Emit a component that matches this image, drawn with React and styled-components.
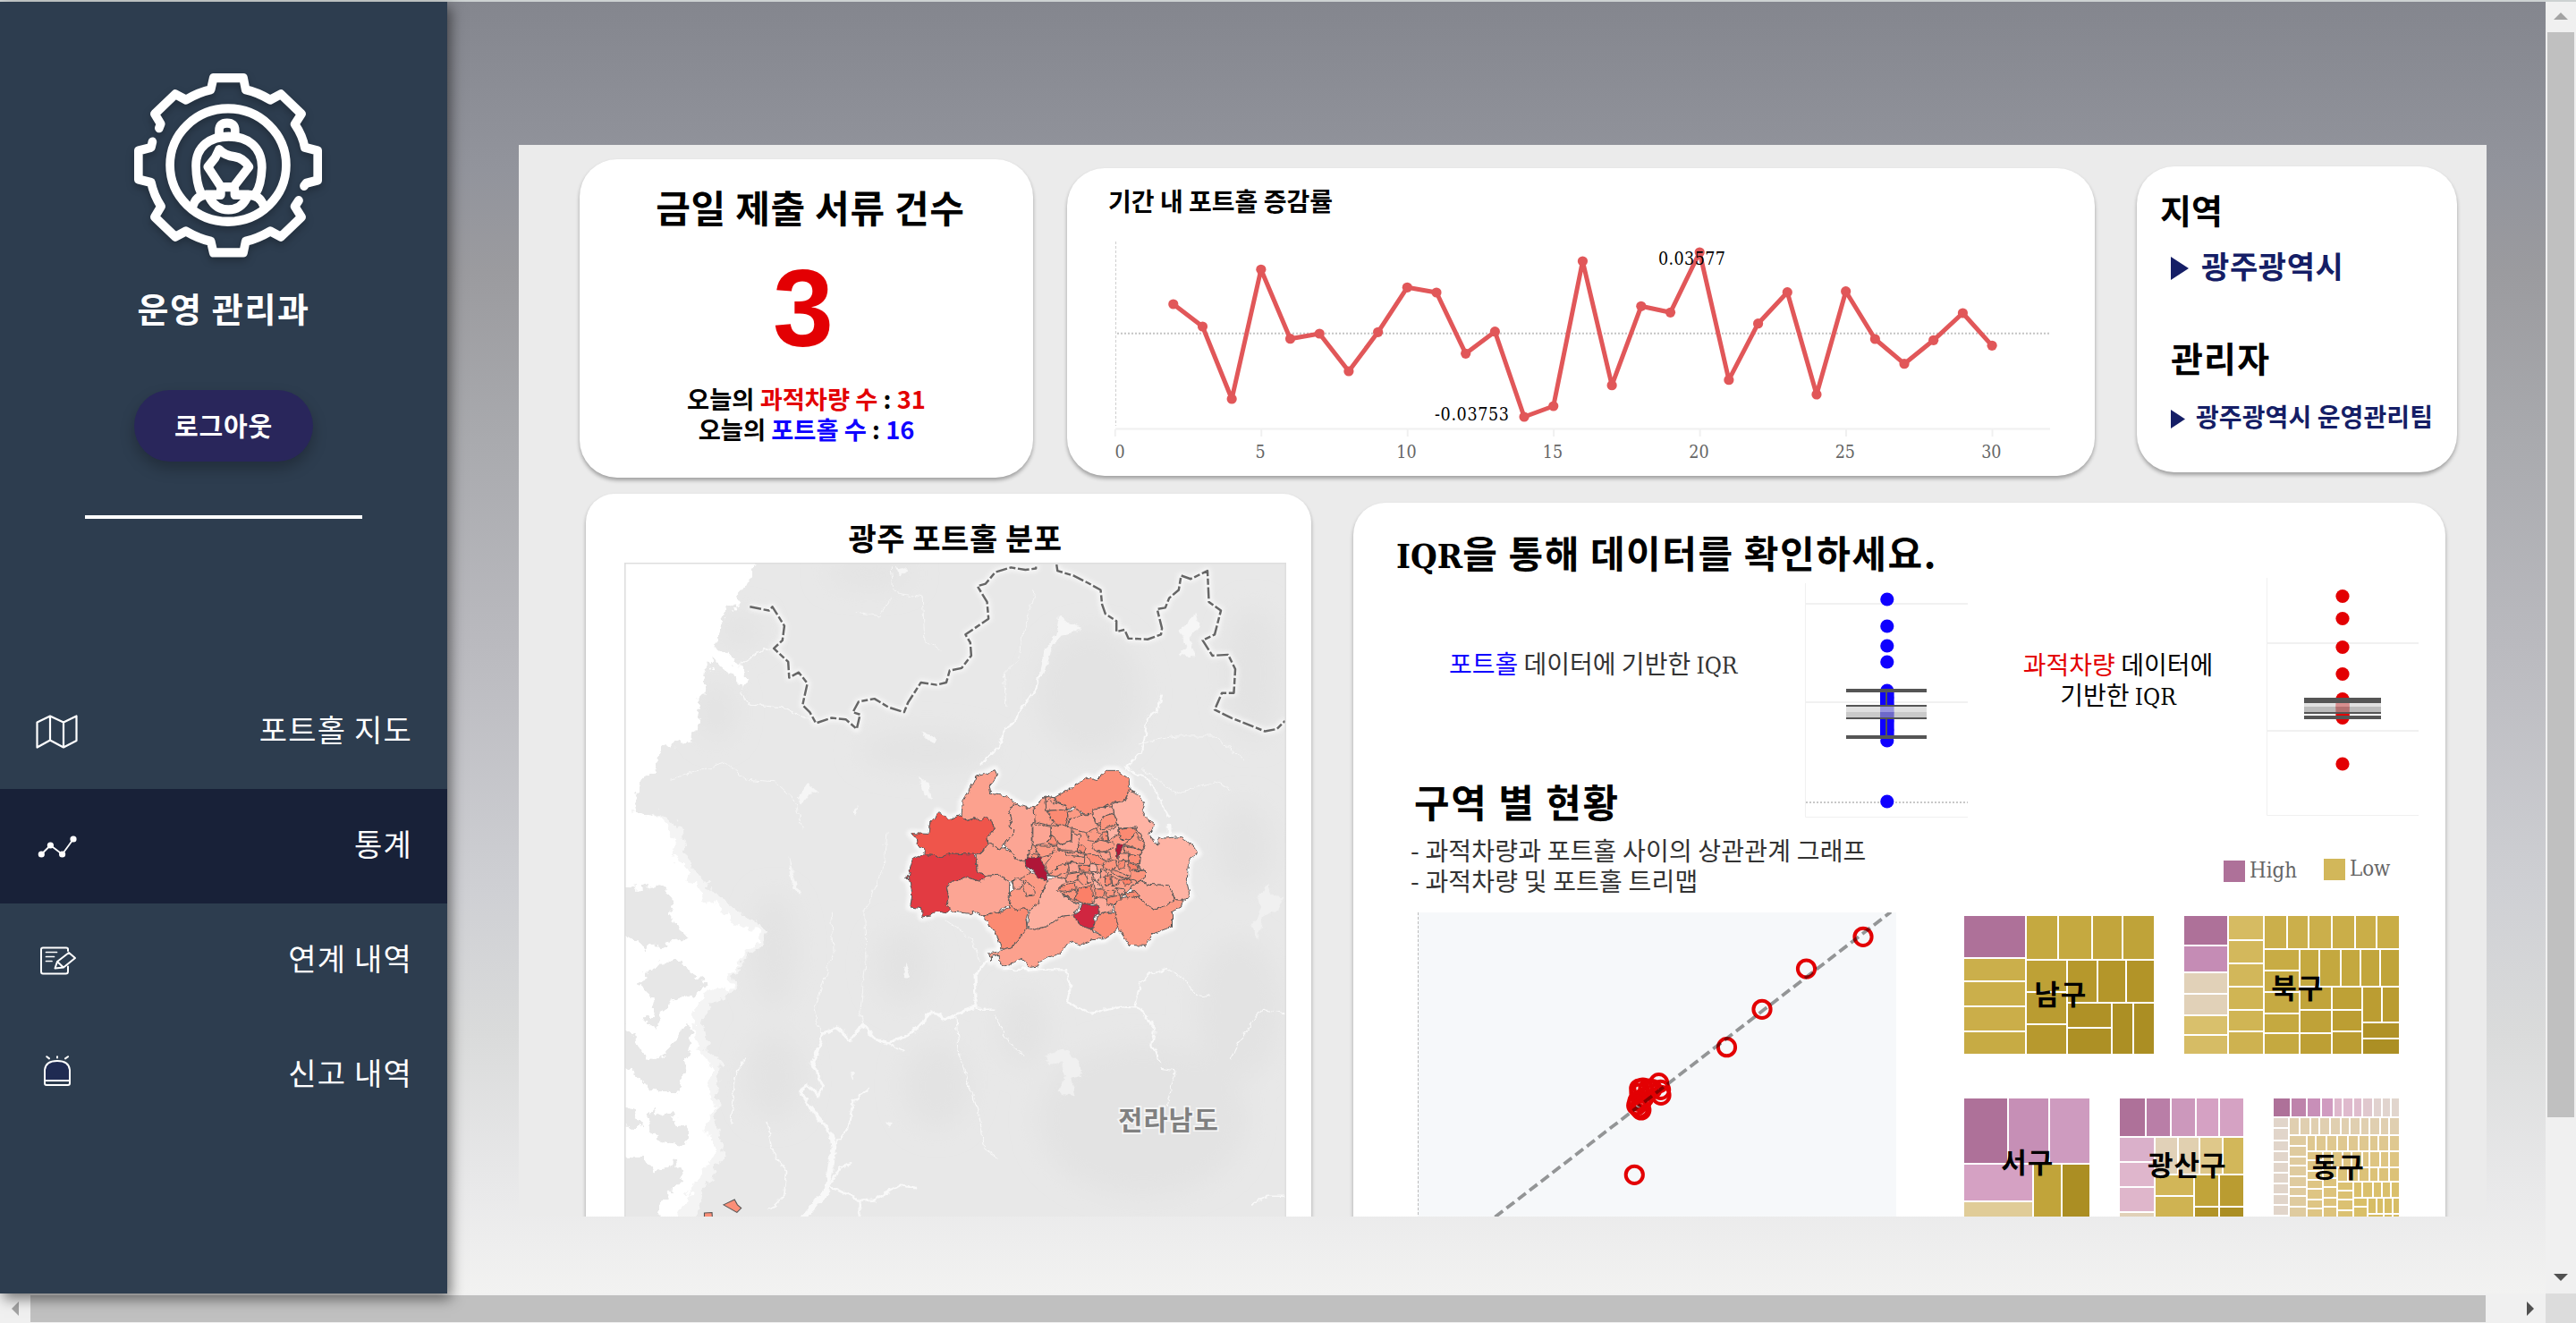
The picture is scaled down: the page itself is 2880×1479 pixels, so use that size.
import React from 'react';
import styled, { createGlobalStyle } from 'styled-components';

const KR = '"Noto Sans CJK KR", sans-serif';
const SLAB = '"DejaVu Serif Condensed", "DejaVu Serif", serif';

const GlobalStyle = createGlobalStyle`
  * { box-sizing: border-box; }
  html, body { margin: 0; padding: 0; overflow: hidden; }
  body { font-family: ${KR}; background: #f0f0f0; color: #000; }
  svg { display: block; flex: none; }
`;

/* ---------- shell ---------- */
const Shell = styled.div`
  display: grid;
  grid-template-columns: 500px 2346px 34px;
  grid-template-rows: 1444px 33px;
  width: 2880px;
  height: 1479px;
  border-top: 2px solid #cdd2d2;
`;
const Sidebar = styled.aside`
  display: flex;
  flex-direction: column;
  align-items: center;
  background: #2d3d4f;
  box-shadow: 4px 6px 14px rgba(0, 0, 0, 0.5);
  color: #fff;
  z-index: 1;
`;
const GearIcon = styled.svg`
  width: 210px;
  height: 206px;
  margin: 80px 0 0 10px;
  overflow: visible;
  filter: drop-shadow(0 4px 4px rgba(0, 0, 0, 0.25));
`;
const Dept = styled.div`
  margin-top: 28px;
  font-size: 38px;
  font-weight: 700;
  line-height: 56px;
  letter-spacing: 1.6px;
`;
const Logout = styled.button`
  width: 200px;
  height: 80px;
  margin-top: 64px;
  padding: 0 0 3px;
  border: 0;
  border-radius: 40px;
  background: #29265b;
  box-shadow: 0 8px 16px rgba(0, 0, 0, 0.25);
  color: #fff;
  font: 700 29px ${KR};
  letter-spacing: 0.8px;
`;
const Rule = styled.hr`
  width: 310px;
  height: 4px;
  margin: 60px 0 0;
  border: 0;
  background: #fff;
`;
const Menu = styled.nav`
  width: 100%;
  margin-top: 174px;
`;
const MenuItem = styled.a`
  display: flex;
  align-items: center;
  justify-content: space-between;
  height: 128px;
  padding: 0 39px 0 40px;
  background: ${(p) => (p.$active ? '#182138' : 'transparent')};
  color: #fff;
`;
const MenuLabel = styled.span`
  padding-bottom: 7px;
  font-size: 34px;
  letter-spacing: 1.2px;
`;
const Main = styled.main`
  padding: 160px 66px 84px 80px;
  background: linear-gradient(
    180deg,
    #84868e 0%,
    #92949c 13%,
    #9b9b9f 21%,
    #a9aaae 34%,
    #bababf 50%,
    #cfd0d4 69%,
    #dadbdb 80%,
    #e9e9ea 92%,
    #f2f2f1 100%
  );
`;
const Panel = styled.section`
  width: 2200px;
  height: 1198px;
  padding-top: 16px;
  overflow: hidden;
  background: #ebebeb;
`;

/* ---------- scroll bars ---------- */
const VBar = styled.div`
  display: flex;
  flex-direction: column;
  align-items: center;
  justify-content: space-between;
  padding: 12px 0 14px;
  background: #f0f0f0;
`;
const VThumb = styled.div`
  width: 30px;
  height: 1213px;
  margin: 14px 0 auto;
  background: #c0c0c0;
`;
const HBar = styled.div`
  grid-column: 1 / 3;
  display: flex;
  align-items: center;
  padding: 0 13px;
  background: #f0f0f0;
`;
const HThumb = styled.div`
  width: 2745px;
  height: 30px;
  margin: 0 auto 0 13px;
  background: #c0c0c0;
`;
const Corner = styled.div`
  background: #dcdcdc;
`;

/* ---------- cards ---------- */
const Row = styled.div`
  display: flex;
  align-items: flex-start;
  width: max-content;
  padding-left: ${(p) => p.$left}px;
  margin-bottom: 18px;
`;
const Card = styled.article`
  width: ${(p) => p.$w}px;
  height: ${(p) => p.$h}px;
  margin: ${(p) => p.$top || 0}px 0 0 ${(p) => p.$gap || 0}px;
  padding-top: ${(p) => p.$pad}px;
  border-radius: ${(p) => p.$radius || 42}px;
  background: #fff;
  box-shadow: 0 3px 4px rgba(0, 0, 0, 0.32);
`;
const Line = styled.div`
  margin: ${(p) => p.$top || 0}px 0 0 ${(p) => p.$left || 0}px;
  font-size: ${(p) => p.$size}px;
  font-weight: ${(p) => p.$weight || 400};
  line-height: ${(p) => p.$lh}px;
  letter-spacing: ${(p) => p.$ls || 0}px;
  text-align: ${(p) => (p.$center ? 'center' : 'left')};
  color: ${(p) => p.$color || '#000'};
  white-space: nowrap;
`;
const BigNumber = styled.div`
  margin: 24px 0 0 -7px;
  font: 700 122px/120px "Liberation Sans", Arial, sans-serif;
  text-align: center;
  color: #e30003;
`;
const Tint = styled.span`
  color: ${(p) => p.$c};
`;
const Slab = styled.span`
  font-family: ${SLAB};
  font-stretch: condensed;
  font-size: ${(p) => p.$size}px;
  line-height: 1;
  letter-spacing: 0;
`;
const Pointer = styled.div`
  display: flex;
  align-items: center;
  gap: ${(p) => p.$gap}px;
  margin: ${(p) => p.$top}px 0 0 38px;
  height: ${(p) => p.$lh}px;
  color: #151e66;
`;
const Arrow = styled.svg`
  margin-top: 6px;
  fill: currentColor;
`;
const Flex = styled.div`
  display: flex;
  align-items: flex-start;
  height: ${(p) => p.$h}px;
`;
const Column = styled.div`
  width: ${(p) => p.$w}px;
  padding-top: ${(p) => p.$pad || 0}px;
`;
const LegendItem = styled.div`
  display: flex;
  align-items: flex-start;
  gap: 5px;
  width: 112px;
  margin-top: ${(p) => p.$top}px;
  color: #666;
`;
const Swatch = styled.span`
  width: 24px;
  height: 24px;
  background: ${(p) => p.$c};
`;
const ScatterSvg = styled.svg`
  margin-left: 72px;
`;
const TreeGrid = styled.div`
  display: flex;
  flex-direction: column;
  gap: 50px;
  padding-top: 4px;
  margin-left: 75px;
`;
const TreeRow = styled.div`
  display: flex;
  gap: 34px;
`;
const TreeBox = styled.figure`
  position: relative;
  margin: 0;
`;
const TreeLabel = styled.figcaption`
  position: absolute;
  left: ${(p) => p.$x}px;
  top: ${(p) => p.$y}px;
  transform: translate(-50%, -50%);
  font-size: 31px;
  font-weight: 700;
  line-height: 40px;
  letter-spacing: 1px;
  white-space: nowrap;
`;
const MapFrame = styled.div`
  width: 740px;
  height: 800px;
  margin: 3px 0 0 43px;
  overflow: hidden;
`;

/* ---------- growth line ---------- */
const growth = [
  340, 365, 446, 301.3, 378.7, 373, 415, 371.3, 321.3, 327, 395.3, 370.7, 466, 454, 292, 430.7,
  342.3, 349.3, 282, 424.7, 361.7, 326.7, 441, 325.7, 379, 406.7, 380.3, 350, 386.3,
].map((y, i) => [1246.4 + 32.69 * (i + 2), y]);

const slabText = { fontFamily: SLAB, fontStretch: 'condensed' };

function GrowthChart() {
  return (
    <svg width="1149" height="288" viewBox="1193 244 1149 288">
      <path d="M1247.5 270V476" stroke="#cfcfcf" strokeDasharray="3 2" />
      <path d="M1247 479.5H2292" stroke="#f0f0f0" strokeWidth="2" />
      {[0, 5, 10, 15, 20, 25, 30].map((n) => (
        <g key={n}>
          <path d={`M${1246.8 + 32.69 * n} 480V488`} stroke="#f0f0f0" strokeWidth="2" />
          <text
            x={n === 0 ? 1252 : 1245.6 + 32.69 * n}
            y="511.5"
            textAnchor="middle"
            fontSize="19.5"
            fill="#666"
            {...slabText}
          >
            {n}
          </text>
        </g>
      ))}
      <path d="M1249 372.7H2292" stroke="#c4c4c4" strokeWidth="2" strokeDasharray="2 2" />
      <polyline
        points={growth.map((p) => p.join(',')).join(' ')}
        fill="none"
        stroke="#e15759"
        strokeWidth="5"
        strokeLinejoin="round"
      />
      {growth.map(([x, y]) => (
        <circle key={x} cx={x} cy={y} r="5.6" fill="#e15759" />
      ))}
      <text x="1854" y="296" fontSize="19.5" textLength="75" {...slabText}>0.03577</text>
      <text x="1604" y="470" fontSize="19.5" textLength="83" {...slabText}>-0.03753</text>
    </svg>
  );
}

/* ---------- box plots ---------- */
function HolePlot() {
  return (
    <svg width="200" height="284" viewBox="2010 646 200 284">
      <path d="M2018.5 652V913.5H2200" fill="none" stroke="#f0f0f0" />
      <path d="M2019 675H2200M2019 785H2200" stroke="#f1f1f1" strokeWidth="2" />
      <path d="M2019 897H2200" stroke="#c8c8c8" strokeWidth="2" strokeDasharray="2 2" />
      <g fill="#0f00ff">
        {[670, 700, 722, 740, 772, 780, 788, 796, 806, 816, 828, 896].map((y) => (
          <circle key={y} cx="2109.8" cy={y} r="7.6" />
        ))}
        <rect x="2102" y="772" width="15.6" height="54" />
      </g>
      <path d="M2109 773V789M2109 803V823" stroke="#555" strokeWidth="2" />
      <rect x="2064" y="790" width="90" height="6" fill="#dcdcdc" fillOpacity=".55" />
      <rect x="2064" y="796" width="90" height="6" fill="#aaa" fillOpacity=".62" />
      <rect x="2064" y="790" width="90" height="6" fill="#ccc" fillOpacity=".35" />
      <path d="M2064 772H2154M2064 824H2154" stroke="#555" strokeWidth="4" />
      <path d="M2064 789H2154M2064 803H2154" stroke="#555" strokeWidth="2" />
    </svg>
  );
}
function OverloadPlot() {
  return (
    <svg width="184" height="284" viewBox="2526 646 184 284">
      <path d="M2534.5 646V911.5H2704" fill="none" stroke="#f0f0f0" />
      <path d="M2535 719H2704M2535 817H2704" stroke="#f1f1f1" strokeWidth="2" />
      <g fill="#e30003">
        {[666.5, 691.5, 723.5, 753.5, 781.5, 790, 802.5, 854].map((y) => (
          <circle key={y} cx="2619" cy={y} r="7.6" />
        ))}
        <rect x="2611.4" y="782" width="15.4" height="20" />
      </g>
      <rect x="2576" y="786" width="86" height="4" fill="#d3d3d3" fillOpacity=".68" />
      <rect x="2576" y="790" width="86" height="6" fill="#a0a0a0" fillOpacity=".7" />
      <path d="M2576 783H2662" stroke="#555" strokeWidth="6" />
      <path d="M2576 797H2662" stroke="#555" strokeWidth="2" />
      <path d="M2576 802H2662" stroke="#555" strokeWidth="4" />
    </svg>
  );
}

/* ---------- scatter ---------- */
const scatter = [
  [2083, 1047.3], [2019.5, 1083], [1970, 1128.3], [1930.5, 1170.7], [1827.3, 1313.3],
  [1854.6, 1210.7], [1856.6, 1218.3], [1857, 1224.3], [1832.8, 1217], [1836.8, 1216],
  [1843, 1217], [1833, 1222], [1838, 1227], [1829.7, 1235.7], [1833, 1239], [1834.8, 1241],
  [1835, 1232], [1847, 1217.5], [1831, 1231],
];
function ScatterChart() {
  return (
    <ScatterSvg width="536" height="340" viewBox="1585 1020 536 340">
      <rect x="1585" y="1020" width="535" height="340" fill="#f6f8fa" />
      <path d="M1585.5 1020V1360" stroke="#bdbdbd" strokeDasharray="3 2" />
      {scatter.map(([x, y], i) => (
        <circle key={i} cx={x} cy={y} r="9.6" fill="none" stroke="#e30003" strokeWidth="4" />
      ))}
      <path
        d="M1671.5 1360.5L2114 1019.5"
        stroke="#000"
        strokeOpacity=".4"
        strokeWidth="3.8"
        strokeDasharray="11 5.2"
      />
    </ScatterSvg>
  );
}

/* ---------- tree maps: [x1, y1, x2, y2, colour] ---------- */
const namgu = [
  [48, 72, 252, 210, '#ae7199'], [48, 216, 252, 288, '#cbaf4b'], [48, 294, 252, 372, '#cbaf4b'],
  [48, 378, 252, 456, '#cbae49'], [48, 462, 252, 534, '#c7ab44'], [258, 72, 360, 216, '#c5a940'],
  [366, 72, 474, 216, '#c5a940'], [480, 72, 576, 216, '#c2a53c'], [582, 72, 684, 216, '#bfa339'],
  [258, 222, 390, 324, '#bea136'], [258, 330, 390, 432, '#ba9c31'], [258, 438, 390, 534, '#b7992e'],
  [396, 222, 492, 360, '#b6982c'], [498, 222, 588, 360, '#b4962a'], [594, 222, 684, 360, '#b29428'],
  [396, 366, 540, 444, '#af9126'], [396, 450, 540, 534, '#ad9025'], [546, 366, 612, 534, '#ac8f24'],
  [618, 366, 684, 534, '#ab8e23'],
];
const bukgu = [
  [786, 72, 930, 168, '#ae7199'], [786, 174, 930, 258, '#c58cb5'], [786, 264, 930, 330, '#e1d1b8'],
  [786, 336, 930, 402, '#e1d1b8'], [786, 408, 930, 468, '#d9c06c'], [786, 474, 930, 534, '#d6bc65'],
  [936, 72, 1050, 150, '#d6bb62'], [936, 156, 1050, 228, '#d3b85c'], [936, 234, 1050, 306, '#d2b75a'],
  [936, 312, 1050, 384, '#d0b554'], [936, 390, 1050, 456, '#d0b554'], [936, 462, 1050, 534, '#ceb250'],
  [1056, 72, 1128, 180, '#cbaf4b'], [1134, 72, 1200, 180, '#cbaf4b'], [1206, 72, 1278, 180, '#cbaf4b'],
  [1284, 72, 1356, 180, '#caae49'], [1362, 72, 1428, 180, '#caae48'], [1434, 72, 1506, 180, '#c9ad46'],
  [1056, 186, 1170, 252, '#c8ac45'], [1056, 258, 1170, 324, '#c7ab43'], [1056, 330, 1170, 396, '#c6aa42'],
  [1056, 402, 1170, 462, '#c5a940'], [1056, 468, 1170, 534, '#c5a940'],
  [1176, 186, 1236, 306, '#c5a940'], [1242, 186, 1308, 306, '#c4a83f'], [1314, 186, 1374, 306, '#c4a83f'],
  [1380, 186, 1440, 306, '#c2a63c'], [1446, 186, 1506, 306, '#c0a43a'],
  [1176, 312, 1278, 384, '#c1a43a'], [1176, 390, 1278, 462, '#bfa238'], [1176, 468, 1278, 534, '#bd9f34'],
  [1284, 312, 1380, 384, '#bea136'], [1284, 390, 1380, 456, '#bc9e33'], [1284, 462, 1380, 534, '#bb9d32'],
  [1386, 312, 1446, 426, '#bb9d32'], [1452, 312, 1506, 426, '#ba9c31'], [1386, 432, 1506, 480, '#b09227'],
  [1386, 486, 1506, 534, '#ac8f24'],
];
const seogu = [
  [48, 684, 192, 900, '#ae7199'], [198, 684, 330, 900, '#c68fb6'], [336, 684, 468, 900, '#ce9bbf'],
  [48, 906, 276, 1026, '#d5a1c3'], [48, 1032, 276, 1080, '#e0cc98'], [282, 906, 372, 1080, '#c1a43a'],
  [378, 906, 468, 1080, '#ab8e23'],
];
const gwangsan = [
  [570, 684, 654, 810, '#ae7199'], [660, 684, 738, 810, '#b97ea7'], [744, 684, 822, 810, '#cc98bc'],
  [828, 684, 900, 810, '#d5a1c3'], [906, 684, 984, 810, '#d5a2c3'], [570, 816, 684, 894, '#dab0ca'],
  [570, 900, 684, 978, '#dfb6cc'], [570, 984, 684, 1062, '#dfb6cb'], [570, 1068, 684, 1080, '#e1d1b8'],
  [690, 816, 762, 936, '#e1d1b8'], [768, 816, 834, 936, '#e1d0b0'], [840, 816, 912, 936, '#dfc88a'],
  [918, 816, 984, 936, '#d2b75a'], [690, 942, 816, 1008, '#d2b658'], [690, 1014, 816, 1080, '#cfb352'],
  [822, 942, 900, 1044, '#c1a43a'], [906, 942, 984, 1044, '#ba9c31'], [822, 1050, 900, 1080, '#b29428'],
  [906, 1050, 984, 1080, '#ab8e23'],
];
const across = (y1, y2, spans, c) => spans.map(([a, b], i) => [a, y1, b, y2, Array.isArray(c) ? c[i] : c]);
const down = (x1, x2, spans, c) => spans.map(([a, b]) => [x1, a, x2, b, c]);
const donggu = [
  ...across(684, 744,
    [[1086, 1140], [1146, 1194], [1200, 1242], [1248, 1284], [1290, 1314], [1320, 1350], [1356, 1380], [1386, 1416], [1422, 1446], [1452, 1476], [1482, 1506]],
    ['#ae7199', '#be83ab', '#c88fb8', '#d09bc0', '#deb8cc', '#dfbacd', '#dfbccd', '#e0c8ce', '#e1d2cf', '#e1d4ce', '#e1d5cd']),
  ...down(1086, 1134, [[750, 780], [786, 822], [828, 858], [864, 894], [900, 930], [936, 966], [972, 1002], [1008, 1038], [1044, 1074]], '#e1d5ca'),
  ...across(750, 804, [[1140, 1170], [1176, 1206], [1212, 1236], [1242, 1272], [1278, 1308], [1314, 1338], [1344, 1374], [1380, 1404], [1410, 1440], [1446, 1470], [1476, 1506]], '#e0cfb0'),
  ...down(1140, 1194, [[810, 840], [846, 876], [882, 906], [912, 942], [948, 978], [984, 1008], [1014, 1044], [1050, 1080]], '#dfcb9f'),
  ...across(810, 858, [[1200, 1224], [1230, 1260], [1266, 1296], [1302, 1332], [1338, 1368], [1374, 1404], [1410, 1434], [1440, 1470], [1476, 1506]], '#dfc890'),
  ...down(1200, 1248, [[864, 888], [894, 924], [930, 954], [960, 984], [990, 1020], [1026, 1050], [1056, 1080]], '#dec584'),
  ...across(864, 912, [[1254, 1278], [1284, 1314], [1320, 1344], [1350, 1380], [1386, 1404], [1410, 1440], [1446, 1470], [1476, 1506]], '#dec582'),
  ...down(1254, 1296, [[918, 948], [954, 978], [984, 1014], [1020, 1044], [1050, 1080]], '#ddc37c'),
  ...across(918, 960, [[1302, 1332], [1338, 1368], [1374, 1404], [1410, 1434], [1440, 1470], [1476, 1506]], '#dcc278'),
  ...down(1302, 1350, [[966, 990], [996, 1020], [1026, 1056], [1062, 1080]], '#dbc172'),
  ...across(966, 1014, [[1356, 1380], [1386, 1416], [1422, 1446], [1452, 1476], [1482, 1506]], '#dac06c'),
  ...down(1356, 1398, [[1020, 1044], [1050, 1080]], '#d9bf68'),
  ...across(1020, 1068, [[1404, 1428], [1434, 1452], [1458, 1482], [1488, 1506]], '#d7bd65'),
  ...across(1074, 1080, [[1404, 1452], [1458, 1482], [1488, 1506]], '#d6bc62'),
];

function Treemap({ cells, box, name, lx, ly }) {
  const [x, y, w, h] = box;
  return (
    <TreeBox>
      <svg width={w / 3} height={h / 3} viewBox={box.join(' ')} shapeRendering="crispEdges">
        {cells.map(([x1, y1, x2, y2, c], i) => (
          <rect key={i} x={x1} y={y1} width={x2 - x1} height={y2 - y1} fill={c} />
        ))}
      </svg>
      <TreeLabel $x={(lx - x) / 3} $y={(ly - y) / 3 - 3}>{name}</TreeLabel>
    </TreeBox>
  );
}

/* ---------- district map ---------- */
const districts = [
  ['#fc9d88', '527,250 563,213 595,218 600,232 638,258 690,272 790,235 812,325 868,318 885,345 898,380 885,410 880,460 900,480 850,520 830,540 818,555 775,575 690,570 660,570 605,525 635,490 600,482 575,480 555,435 550,418 497,425 521,380 521,310'],
  ['#fca18e', '284,277 287,232 312,190 332,147 362,140 395,125 402,140 390,165 377,180 382,205 430,212 470,240 455,245 443,262 452,290 443,315 457,325 455,350 430,365 420,385 410,393 395,380 372,372 370,350 392,322 385,298 368,284 350,295 330,286 302,295'],
  ['#ef544c', '205,266 240,290 284,277 302,295 330,286 350,295 368,284 385,298 392,322 370,350 372,372 355,400 325,410 250,405 215,420 190,412 162,410 155,390 138,378 135,360 115,338 172,340 178,300 195,290'],
  ['#e23b42', '120,422 155,410 190,412 215,420 245,405 325,408 332,425 335,465 368,480 345,498 320,490 295,485 250,500 234,520 240,550 233,580 245,590 232,605 200,600 180,612 152,618 150,590 112,585 118,540 108,488 93,486 108,480 112,450'],
  ['#fca594', '234,520 250,500 295,485 320,490 345,498 368,480 410,478 445,500 443,560 445,575 400,605 355,615 320,598 315,607 250,600 233,580 240,550'],
  ['#fca08d', '372,372 395,380 410,393 420,385 445,395 470,425 495,435 497,448 514,465 495,485 478,495 445,497 410,478 368,480 335,465 332,410 355,400'],
  ['#fca594', '470,240 500,250 527,250 530,300 521,310 521,380 510,400 505,420 495,435 470,425 445,395 430,380 430,365 455,350 457,325 443,315 452,290 443,262 455,245'],
  ['#fb8a72', '445,575 443,590 400,605 355,615 375,640 380,655 395,662 405,690 420,727 455,718 480,690 503,660 500,625 508,595 490,590 470,598'],
  ['#fca18e', '420,727 455,718 503,655 525,660 545,655 570,650 620,615 657,612 665,625 690,650 718,658 725,670 755,680 757,692 720,695 685,712 645,700 615,740 570,755 545,770 540,783 514,787 500,770 485,757 460,770 430,782 412,775 410,745 385,750 383,765 375,740 410,735'],
  ['#fdb0a0', '572,498 600,482 635,490 630,505 610,520 625,545 660,570 680,578 657,612 620,615 570,650 545,655 525,660 503,650 510,600 540,570 550,548 565,510'],
  ['#fc9a84', '450,497 478,495 514,465 530,475 545,490 572,498 565,510 548,550 540,575 508,598 490,590 470,598 445,575 447,535 460,525'],
  ['#fca594', '455,500 470,487 490,500 480,525 458,525'],
  ['#fc9d88', '498,495 525,520 528,545 500,550 490,515'],
  ['#fb8e77', '595,218 660,180 703,150 735,160 770,127 805,127 845,155 847,190 830,230 790,235 760,250 725,255 720,275 690,272 680,262 655,250 638,258 630,245 600,232'],
  ['#feb3a4', '847,190 880,210 897,235 888,260 905,290 930,310 913,340 930,370 943,375 945,355 1020,350 1060,380 1077,405 1050,420 1043,450 1040,505 1050,548 1030,562 1000,560 990,535 975,512 910,508 885,495 900,480 900,462 880,460 885,410 898,380 885,345 868,318 830,320 812,325 805,300 795,270 790,235 830,230'],
  ['#fca594', '850,520 885,495 910,508 975,512 990,535 998,560 970,580 935,593 905,580 880,555 860,535'],
  ['#fc9a84', '795,580 818,555 860,545 880,555 905,580 935,593 970,580 998,560 1030,562 1020,585 990,600 990,650 925,675 900,715 845,712 815,665 800,625'],
  ['#fb8c75', '718,658 733,640 735,620 765,602 797,605 810,650 800,665 765,690 755,680'],
  ['#fdaa9a', '725,575 735,555 775,560 790,585 790,600 765,602 745,612 745,582'],
  ['#fc9d88', '527,250 565,215 568,262 590,300 583,312 530,300'],
  ['#fca18e', '565,215 590,235 635,245 635,258 568,262'],
  ['#fb8a72', '572,262 638,258 640,285 632,315 610,310 590,300'],
  ['#fc9a84', '638,268 655,262 665,248 680,262 682,285 668,292 645,290'],
  ['#fca18e', '642,295 690,275 725,275 727,300 745,310 735,325 710,338 640,320'],
  ['#fca594', '725,255 790,248 795,270 762,280 755,300 735,305 725,280'],
  ['#fc957e', '762,280 795,270 805,305 755,325 745,310'],
  ['#fca594', '523,305 583,316 583,345 570,370 523,378'],
  ['#fc9d88', '585,316 620,308 652,320 652,365 610,375 600,355 583,345'],
  ['#fb8e77', '570,370 583,345 600,355 605,375 595,380'],
  ['#fc9a84', '530,380 595,382 590,408 550,418 535,402'],
  ['#fb8e77', '520,405 545,410 530,430 518,420'],
  ['#fca594', '600,380 652,365 655,332 685,345 675,375 675,398 610,392'],
  ['#fb8e77', '675,375 690,378 702,390 695,402 675,398'],
  ['#fc9a84', '705,335 735,320 750,345 735,365 710,362'],
  ['#fb8e77', '755,335 770,332 772,362 755,362'],
  ['#feb3a4', '770,330 810,312 812,340 775,365'],
  ['#fb8a72', '812,325 868,318 870,335 845,360 818,362'],
  ['#fc9a84', '845,360 868,335 898,380 890,395 830,375'],
  ['#fc9d88', '720,375 745,360 795,370 790,390 755,400 730,395'],
  ['#fc9d88', '592,408 605,392 697,418 695,440 640,432 575,478 565,440'],
  ['#fc9d88', '630,400 697,405 695,418 635,410'],
  ['#fc9a84', '575,478 610,445 640,440 640,470 600,482'],
  ['#fca594', '642,435 675,440 680,465 645,470'],
  ['#fb8a72', '680,445 715,445 712,465 682,465'],
  ['#fc9d88', '635,475 680,468 670,495 635,502'],
  ['#fb8e77', '610,520 665,502 668,525 625,532 605,530'],
  ['#fc957e', '620,540 668,528 665,565'],
  ['#fb8068', '672,525 720,512 725,575 690,572 665,560'],
  ['#fc9a84', '680,470 698,470 710,505 690,510 675,495'],
  ['#fca594', '700,470 720,472 722,500 710,505'],
  ['#feb3a4', '715,440 735,440 740,465 720,470 712,460'],
  ['#fb8e77', '697,408 730,410 765,430 755,445 720,438'],
  ['#fca18e', '740,400 780,400 785,425 765,430'],
  ['#fc957e', '770,435 800,425 805,450 785,465 755,450'],
  ['#fb8a72', '810,430 835,430 830,450 812,460'],
  ['#fc9a84', '830,380 890,395 880,412 832,405'],
  ['#fb8e77', '845,405 882,412 880,440 845,435'],
  ['#fb8068', '845,440 880,445 870,462 845,462'],
  ['#fca18e', '812,405 842,405 845,430 812,428'],
  ['#fc957e', '850,465 900,462 900,485 875,500 850,490'],
  ['#fc9a84', '790,460 845,480 835,490 790,472'],
  ['#feb3a4', '720,470 745,468 750,490 735,500'],
  ['#fca18e', '750,455 775,470 770,490 750,485'],
  ['#fb8a72', '765,480 785,475 785,510 765,515'],
  ['#fc9a84', '787,485 815,490 810,510 790,515'],
  ['#fb8068', '817,490 850,490 855,505 830,515'],
  ['#fdb0a0', '720,495 745,500 755,520 735,530'],
  ['#fb8e77', '730,525 765,525 760,550 730,555'],
  ['#fc957e', '765,530 795,525 800,545 770,550'],
  ['#fb8e77', '770,555 815,545 818,560 795,580 772,575'],
  ['#fca18e', '800,520 830,525 835,545 815,545'],
  ['#fb8a72', '835,538 870,532 882,548 840,555'],
  ['#af1338', '497,425 520,420 550,418 555,435 565,455 572,498 545,490 530,470 514,455 497,448'],
  ['#d0263f', '690,570 720,580 745,582 745,605 725,620 733,640 715,657 690,650 665,625 657,610 680,595'],
  ['#af1338', '805,370 830,375 818,400 805,422 803,395'],
];
const provinceLines = [
  'M370,260 410,268 417,260 442,300 438,330 420,347 450,375 452,408 472,397 490,420 480,465 495,480 508,503 540,492 570,495 593,515 600,485 585,480 597,458 630,452 660,470 692,480 700,460 727,418 760,423 780,418 787,393 812,388 832,362 830,335 820,318 868,285 865,250 845,217 862,212 882,188 915,178 945,183 967,180 967,172',
  'M1010,172 1012,185 1045,195 1075,210 1102,225 1105,255 1112,275 1135,290 1135,312 1152,308 1160,326 1200,328 1228,318 1230,305 1220,265 1237,262 1245,242 1265,225 1270,195 1290,202 1325,185 1328,250 1353,268 1340,318 1315,330 1335,362 1368,360 1383,390 1380,440 1355,440 1340,475 1375,492 1445,520 1470,515 1487,498',
];
const rivers = [
  [4, 'M975,405 968,430 930,480 925,500 905,510 890,550 852,590'],
  [3.5, 'M1230,445 1220,478 1200,490 1190,560 1155,595'],
  [3.5, 'M1155,597 1195,615 1220,650 1245,700'],
  [9, 'M1245,715V742'],
  [6, 'M865,1000 840,1030 842,1095 805,1108 780,1120 750,1105 710,1150 660,1170 630,1162 605,1132 580,1165 550,1138 525,1150 500,1215 522,1260 515,1280 490,1258 475,1270 500,1310 540,1360'],
  [12, 'M540,1360 545,1390 530,1480 485,1531'],
  [3, 'M840,1100H880M660,1170L690,1186'],
  [4, 'M900,1017 1030,1018 1040,1050 1032,1085 1085,1110 1145,1093 1180,1095 1215,1140 1210,1175 1228,1210'],
  [3, 'M1172,1093 1185,1045 1205,1025 1240,1015'],
  [2, 'M1240,1015 1280,1040 1300,1070 1330,1075M1228,1225 1258,1230 1240,1300'],
  [2, 'M800,1115 808,1200 850,1330 860,1390 890,1410'],
  [5, 'M535,1468 600,1500 630,1498 680,1468 720,1475'],
  [4, 'M545,1385 575,1350 585,1290 620,1265M535,1468 560,1430 585,1422M600,1500V1531'],
  [1.5, 'M205,620 320,585 360,620 420,625 460,660 480,720M655,730 650,800 610,900 612,1000 600,1110 605,1132M540,900 545,980 520,1050 505,1110 520,1150'],
  [1.5, 'M965,225 945,300 930,370 900,400 905,470M665,180 670,230 730,240 735,330 765,350M590,270 640,280 665,240'],
  [1.5, 'M780,915 830,950 850,1000M1180,545 1260,530 1340,530 1400,580M1190,600 1260,650 1340,625 1375,640'],
  [2, 'M345,385 400,348 420,347M350,440 370,465 440,470 500,500M1485,1110 1440,1100 1400,1150 1375,1205M880,1110 910,1170 940,1195'],
  [3, 'M1418,1505 1450,1490 1487,1490M405,1335 415,1390 445,1440 440,1490 410,1520M330,1340 340,1240 360,1200'],
];

function DistrictMap() {
  const pts = districts.map((d) => d[1]);
  return (
    <svg width="740" height="800" viewBox="108 168 1381.3 1493.3">
      <defs>
        <filter id="rough" x="-5%" y="-5%" width="110%" height="110%">
          <feTurbulence type="fractalNoise" baseFrequency="0.06" numOctaves="3" seed="4" result="n" />
          <feDisplacementMap in="SourceGraphic" in2="n" scale="14" xChannelSelector="R" yChannelSelector="G" />
        </filter>
        <filter id="coast" x="-5%" y="-5%" width="110%" height="110%">
          <feTurbulence type="fractalNoise" baseFrequency="0.045" numOctaves="4" seed="9" result="n" />
          <feDisplacementMap in="SourceGraphic" in2="n" scale="36" xChannelSelector="R" yChannelSelector="G" />
        </filter>
        <filter id="soft" x="-30%" y="-30%" width="160%" height="160%">
          <feGaussianBlur stdDeviation="26" />
        </filter>
        <filter id="halo" x="-10%" y="-10%" width="120%" height="120%">
          <feGaussianBlur stdDeviation="5" />
        </filter>
      </defs>
      <rect x="108" y="168" width="1382" height="1500" fill="#e8e8e8" />
      <g fill="#e3e3e3" filter="url(#soft)">
        <ellipse cx="620" cy="190" rx="90" ry="30" />
        <ellipse cx="350" cy="310" rx="45" ry="35" />
        <ellipse cx="1080" cy="440" rx="110" ry="130" />
        <ellipse cx="740" cy="560" rx="140" ry="40" />
        <ellipse cx="300" cy="480" rx="40" ry="60" />
        <ellipse cx="420" cy="980" rx="50" ry="120" />
        <ellipse cx="690" cy="1010" rx="60" ry="80" />
        <ellipse cx="940" cy="1140" rx="50" ry="80" />
        <ellipse cx="1190" cy="1330" rx="220" ry="160" />
        <ellipse cx="760" cy="1260" rx="70" ry="90" />
        <ellipse cx="420" cy="1240" rx="60" ry="90" />
        <ellipse cx="1400" cy="760" rx="60" ry="90" />
        <ellipse cx="1390" cy="1100" rx="90" ry="150" />
        <ellipse cx="1420" cy="400" rx="60" ry="140" />
      </g>
      <g filter="url(#coast)">
        <path
          fill="#f4f4f4"
          d="M90 700 190 695 230 720 240 790 300 860 400 935 395 965 345 1010 335 1060 285 1090 268 1120 285 1190 310 1210 300 1310 315 1400 280 1470 250 1540H90Z"
        />
        <path
          fill="#fff"
          d="M80 150H390L362 215 342 250 322 275 305 300 298 335 345 385 372 410 360 435 335 400 290 375 272 430 262 490 248 545 200 548 178 572 172 600 148 618 132 660 134 692 180 700 210 740 215 780 240 820 268 855 310 888 330 920 388 938 385 962 345 1000 325 1055 275 1062 250 1115 262 1180 290 1215 280 1260 296 1310 275 1345 300 1395 262 1460 235 1500 215 1540H80Z"
        />
        <g fill="#e7e7e7">
          <path d="M90 850 150 845 185 838 210 870 200 905 238 950 200 962 150 975 130 955 90 945Z" />
          <path d="M165 1005 220 1000 275 1045 255 1075 200 1090 175 1140 155 1130 170 1075 140 1050Z" />
          <path d="M90 1120 130 1150 155 1210 200 1190 235 1130 250 1140 240 1200 225 1270 195 1280 160 1262 130 1230 90 1215Z" />
          <path d="M90 1285 130 1310 140 1350 90 1345Z" />
          <path d="M165 1310 205 1322 240 1360 232 1385 190 1380 160 1350Z" />
          <path d="M90 1405 150 1410 165 1440 220 1425 235 1450 190 1500 180 1540H90Z" />
        </g>
      </g>
      <g fill="#f6f6f6" filter="url(#rough)">
        <path d="M1015 280 1035 292 1062 302 1045 316 1022 320 1000 345 992 375 980 405 972 405 985 350 1008 320Z" />
        <path d="M1300 275 1308 300 1285 325 1300 365 1262 362 1282 345 1266 312Z" />
        <path d="M722 612 742 628 748 662 735 655Z" />
        <path fill="#f0f0f0" d="M985 1200 1025 1180 1055 1208 1066 1238 1040 1245 1050 1280 1012 1272 1030 1240 1018 1208 995 1215Z" />
        <path fill="#f0f0f0" d="M1430 860 1452 840 1458 862 1485 865 1465 895 1442 905 1430 955 1418 925 1438 890Z" />
        <path d="M470 660 490 630 515 650 495 648 475 675ZM585 680 595 675 587 697ZM695 1000 705 1035 690 1035ZM580 1230 592 1230 587 1248ZM655 1335 670 1340 660 1345ZM675 175 700 185 685 198ZM730 520 760 535 755 545 735 535Z" />
        <path d="M450 780 475 865 460 850Z" />
      </g>
      <g fill="none" stroke="#f9f9f9" strokeLinejoin="round" strokeLinecap="round" filter="url(#rough)">
        {rivers.map(([w, d]) => (
          <path key={d} d={d} strokeWidth={w} />
        ))}
      </g>
      {provinceLines.map((d) => (
        <g key={d} fill="none" strokeLinejoin="round">
          <path d={d} stroke="#fff" strokeOpacity=".7" strokeWidth="13" filter="url(#halo)" />
          <path d={d} stroke="#666" strokeWidth="4.6" strokeDasharray="24 5 13 5" />
        </g>
      ))}
      <g transform="translate(634.7 522.7) scale(.6222)">
        <g filter="url(#halo)" stroke="#fff" strokeWidth="30" strokeLinejoin="round" strokeOpacity=".6">
          {pts.slice(0, 19).map((p) => (
            <polygon key={p} points={p} fill="#fff" />
          ))}
        </g>
        <g transform="translate(1 0)" filter="url(#rough)" stroke="#555" strokeWidth="3" strokeLinejoin="round">
          {districts.map(([c, p]) => (
            <polygon key={p} points={p} fill={c} />
          ))}
        </g>
      </g>
      <g fill="#fb8e77" stroke="#555" strokeWidth="2">
        <path d="M315 1508 338 1497 344 1508 352 1515 343 1524Z" />
        <path d="M275 1525 291 1524 292 1540H275Z" />
      </g>
      <text
        x="1139"
        y="1351"
        fontSize="55"
        fontWeight="700"
        textLength="208"
        fill="#808080"
        stroke="#f4f4f4"
        strokeWidth="7"
        paintOrder="stroke"
        fontFamily={KR}
      >
        전라남도
      </text>
      <path d="M109.5 1670V169.5H1488V1670" fill="none" stroke="#dedede" strokeWidth="3" />
    </svg>
  );
}

/* ---------- sidebar icons ---------- */
const iconProps = { fill: 'none', stroke: '#fff', strokeLinejoin: 'round', strokeLinecap: 'round' };

function MapIcon() {
  return (
    <svg width="47" height="38" viewBox="0 0 47 38" strokeWidth="2.2" {...iconProps}>
      <path d="M1.5 8.5 16 1.5 31 8.5 45.5 1.5V29L31 36.5 16 28.5 1.5 36.5ZM16 1.5V28.5M31 8.5V36.5" />
    </svg>
  );
}
function TrendIcon() {
  return (
    <svg width="49" height="30" viewBox="40 930 49 30" strokeWidth="1.8" {...iconProps}>
      <path d="M46.3 954 56.4 944 69.6 954 82 937" />
      <g fill="#fff" stroke="none">
        <circle cx="46.3" cy="954" r="3.6" />
        <circle cx="56.4" cy="944" r="3.6" />
        <circle cx="69.6" cy="954" r="3.6" />
        <circle cx="82" cy="937" r="3.6" />
      </g>
    </svg>
  );
}
function NoteIcon() {
  return (
    <svg width="49" height="34" viewBox="40 1057 49 34" strokeWidth="2" {...iconProps}>
      <path d="M76 1063V1061Q76 1059.5 74 1059.5H48Q46 1059.5 46 1061.5V1086Q46 1088.5 48 1088.5H73.5Q76 1088.5 76 1086V1080.5" />
      <path d="M51.5 1064.5H63.5M51.5 1069.5H60.5M51.5 1074.5H58" strokeWidth="1.7" />
      <path d="M61.5 1082.5 64 1075 77 1065 84 1071 71 1081.5ZM64 1075 71 1081.5" />
    </svg>
  );
}
function SirenIcon() {
  return (
    <svg width="49" height="44" viewBox="40 1180 49 44" strokeWidth="2" {...iconProps}>
      <path d="M50 1208V1196Q51 1186 64 1186Q77 1186 78 1196V1208Z" fill="#1f2b52" />
      <path d="M50 1208H78V1211Q78 1213 76 1213H52Q50 1213 50 1211Z" />
      <path d="M64 1181.2V1182.5M52.3 1181.2 55 1183.4M76 1181.2 73 1183.4" />
    </svg>
  );
}

const menu = [
  ['포트홀 지도', MapIcon],
  ['통계', TrendIcon],
  ['연계 내역', NoteIcon],
  ['신고 내역', SirenIcon],
];

export default function App() {
  return (
    <>
      <GlobalStyle />
      <Shell>
        <Sidebar>
          <GearIcon
            viewBox="406 208 566 522"
            preserveAspectRatio="none"
            fill="none"
            stroke="#fff"
            strokeWidth="26"
            strokeLinejoin="round"
            strokeLinecap="round"
          >
            <path d="M481 363 486 351 468 323 530 267 562 283Q598 262 637 254L645 221H735L742 254Q780 262 816 283L848 267 910 323 890 352Q914 385 920 418L959 427V511L925 519 918 527" />
            <path d="M902 568 890 585 910 615 848 671 816 655Q780 675 742 684L735 716H645L637 684Q598 675 562 655L530 671 468 615 487 585Q465 553 457 517L419 508V427L457 418 461 402" />
            <ellipse cx="689" cy="468" rx="175" ry="160" />
            <path d="M662 384V370Q662 349 686 349Q710 349 710 370V384" />
            <path d="M608 548Q593 520 592 470C592 415 635 387 691 387S791 415 791 475Q789 525 772 548" />
            <path d="M662 424 650 447 628 473 668 530H705L752 473Q736 448 708 444Q680 442 662 424Z" />
            <path d="M584 582Q592 556 622 552H667V535M709 535V552H752Q785 553 796 582" />
            <path d="M633 560Q652 594 690 594T746 560" />
          </GearIcon>
          <Dept>운영 관리과</Dept>
          <Logout>로그아웃</Logout>
          <Rule />
          <Menu>
            {menu.map(([label, Icon]) => (
              <MenuItem key={label} $active={label === '통계'}>
                <Icon />
                <MenuLabel>{label}</MenuLabel>
              </MenuItem>
            ))}
          </Menu>
        </Sidebar>

        <Main>
          <Panel>
            <Row $left={68}>
              <Card $w={507} $h={356} $pad={23}>
                <Line $center $left={9} $size={42} $weight={700} $lh={60} $ls={0.7}>금일 제출 서류 건수</Line>
                <BigNumber>3</BigNumber>
                <Line $center $top={23} $size={27.3} $weight={700} $lh={34}>
                  오늘의 <Tint $c="#e30003">과적차량 수</Tint> : <Tint $c="#e30003">31</Tint>
                </Line>
                <Line $center $size={27.3} $weight={700} $lh={34}>
                  오늘의 <Tint $c="#0f00ff">포트홀 수</Tint> : <Tint $c="#0f00ff">16</Tint>
                </Line>
              </Card>
              <Card $w={1149} $h={344} $pad={16} $top={10} $gap={38}>
                <Line $left={46} $size={28} $weight={700} $lh={40}>기간 내 포트홀 증감률</Line>
                <GrowthChart />
              </Card>
              <Card $w={358} $h={342} $pad={23} $top={8} $gap={47}>
                <Line $left={26} $size={38} $weight={700} $lh={50}>지역</Line>
                <Pointer $top={16} $lh={44} $gap={14}>
                  <Arrow width="20" height="26" viewBox="0 0 20 26"><path d="M0 0 20 13 0 26Z" /></Arrow>
                  <Line $size={34} $weight={700} $lh={44} $color="#151e66" $ls={0.6}>광주광역시</Line>
                </Pointer>
                <Line $left={38} $top={54.7} $size={39} $weight={700} $lh={50} $ls={1.2}>관리자</Line>
                <Pointer $top={21.6} $lh={40} $gap={12}>
                  <Arrow width="16" height="21" viewBox="0 0 16 21"><path d="M0 0 16 10.5 0 21Z" /></Arrow>
                  <Line $size={28} $weight={700} $lh={40} $color="#151e66" $ls={0.1}>광주광역시 운영관리팀</Line>
                </Pointer>
              </Card>
            </Row>

            <Row $left={75}>
              <Card $w={811} $h={900} $pad={24} $radius={32}>
                <Line $center $left={15} $size={34} $weight={700} $lh={50} $ls={0.5}>광주 포트홀 분포</Line>
                <MapFrame>
                  <DistrictMap />
                </MapFrame>
              </Card>
              <Card $w={1221} $h={890} $pad={25} $top={10} $gap={47} $radius={36}>
                <Line $left={48} $size={42} $weight={700} $lh={59} $ls={1.55}>
                  <Slab $size={38}>IQR</Slab>을 통해 데이터를 확인하세요.
                </Line>
                <Flex $h={284}>
                  <Column $w={497} $pad={78}>
                    <Line $left={107} $size={28} $lh={34} $color="#333">
                      <Tint $c="#0f00ff">포트홀</Tint> 데이터에 기반한 <Slab $size={26}>IQR</Slab>
                    </Line>
                    <Line $left={68} $top={112} $size={43} $weight={700} $lh={50} $ls={1.8}>구역 별 현황</Line>
                  </Column>
                  <HolePlot />
                  <Column $w={316} $pad={79}>
                    <Line $center $size={28} $lh={34}><Tint $c="#e30003">과적차량</Tint> 데이터에</Line>
                    <Line $center $size={28} $lh={34}>기반한 <Slab $size={26}>IQR</Slab></Line>
                  </Column>
                  <OverloadPlot />
                </Flex>
                <Flex $h={90}>
                  <Column $w={973} $pad={3}>
                    <Line $left={64} $size={28} $lh={34} $ls={0.2} $color="#333">- 과적차량과 포트홀 사이의 상관관계 그래프</Line>
                    <Line $left={64} $size={28} $lh={34} $ls={0.2} $color="#333">- 과적차량 및 포트홀 트리맵</Line>
                  </Column>
                  <LegendItem $top={32}><Swatch $c="#ae7199" /><Slab $size={23.8}>High</Slab></LegendItem>
                  <LegendItem $top={30}><Swatch $c="#d2b75a" /><Slab $size={23.8}>Low</Slab></LegendItem>
                </Flex>
                <Flex $h={340}>
                  <ScatterChart />
                  <TreeGrid>
                    <TreeRow>
                      <Treemap cells={namgu} box={[48, 72, 636, 462]} name="남구" lx={371} ly={340} />
                      <Treemap cells={bukgu} box={[786, 72, 720, 462]} name="북구" lx={1166} ly={318} />
                    </TreeRow>
                    <TreeRow>
                      <Treemap cells={seogu} box={[48, 684, 420, 396]} name="서구" lx={260} ly={902} />
                      <Treemap cells={gwangsan} box={[570, 684, 414, 396]} name="광산구" lx={796} ly={913} />
                      <Treemap cells={donggu} box={[1086, 684, 420, 396]} name="동구" lx={1303} ly={919} />
                    </TreeRow>
                  </TreeGrid>
                </Flex>
              </Card>
            </Row>
          </Panel>
        </Main>

        <VBar>
          <svg width="16" height="8" viewBox="0 0 16 8"><path d="M0 8 8 0 16 8Z" fill="#a3a3a3" /></svg>
          <VThumb />
          <svg width="16" height="8" viewBox="0 0 16 8"><path d="M0 0 8 8 16 0Z" fill="#505050" /></svg>
        </VBar>
        <HBar>
          <svg width="8" height="16" viewBox="0 0 8 16"><path d="M8 0 0 8 8 16Z" fill="#a3a3a3" /></svg>
          <HThumb />
          <svg width="8" height="16" viewBox="0 0 8 16"><path d="M0 0 8 8 0 16Z" fill="#505050" /></svg>
        </HBar>
        <Corner />
      </Shell>
    </>
  );
}
